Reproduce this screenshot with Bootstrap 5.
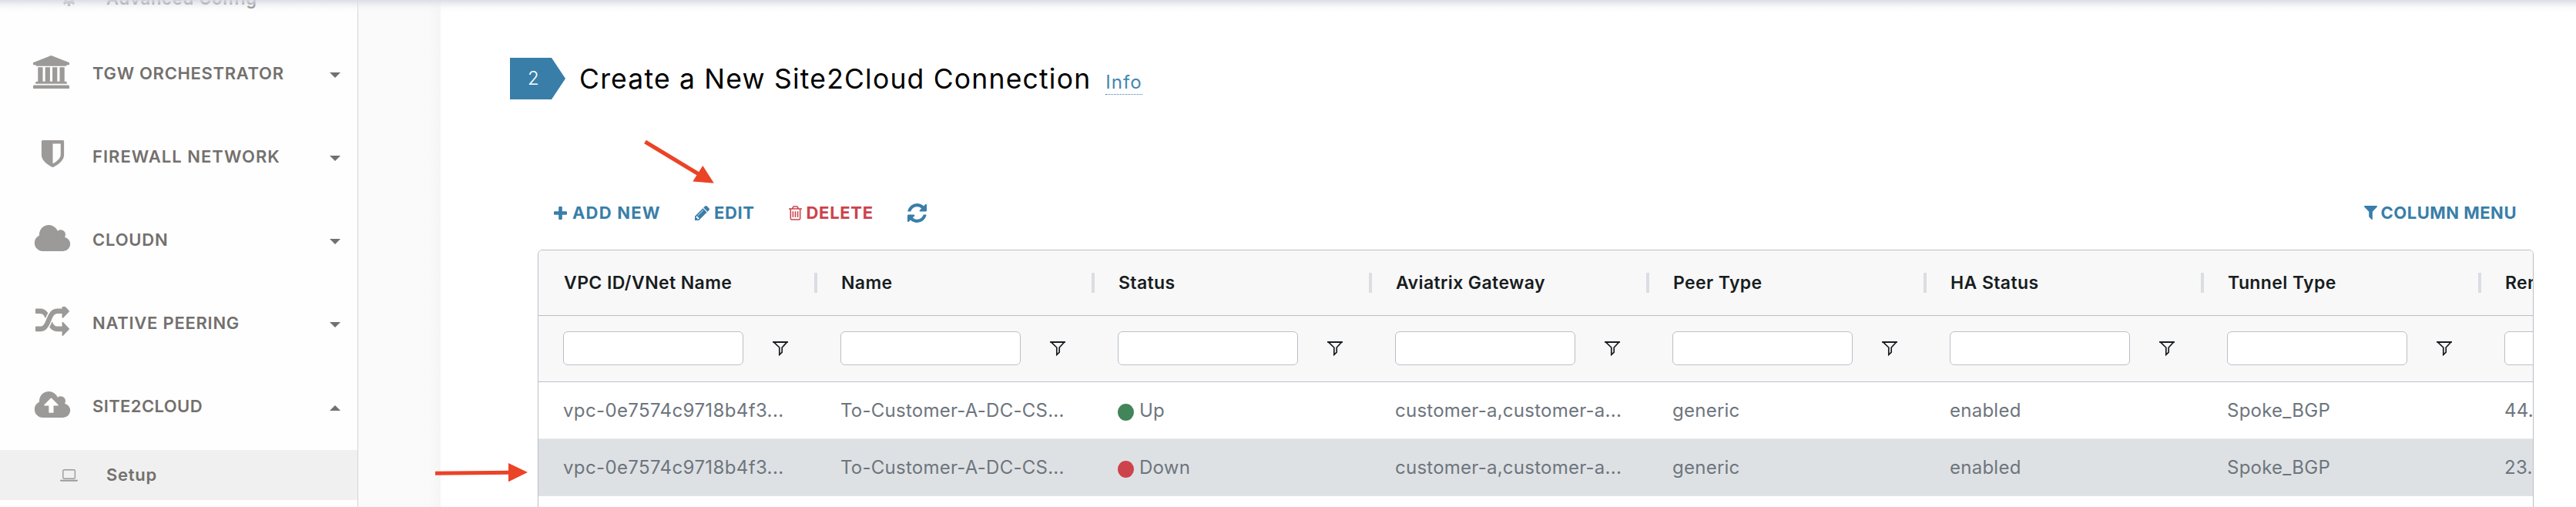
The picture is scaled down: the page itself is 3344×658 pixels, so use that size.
<!DOCTYPE html>
<html lang="en">
<head>
<meta charset="utf-8">
<title>Site2Cloud Setup</title>
<link href="https://cdn.jsdelivr.net/npm/bootstrap@5.3.0/dist/css/bootstrap.min.css" rel="stylesheet">
<style>
  body { font-family: Inter, "Liberation Sans", sans-serif; background: #fff; height: 658px; overflow: hidden; }
  svg { display: block; flex: none; }
  .top-shade { height: 16px; z-index: 5; background: linear-gradient(rgba(217,219,228,.9), rgba(225,227,234,.62) 30%, rgba(240,241,245,.3) 65%, rgba(255,255,255,0)); }

  /* sidebar */
  .side-panel { width: 465px; height: 658px; border-right: 1px solid #d4d4d4; background: #fefefe; color: #73706d; font-size: 22px; font-weight: 600; }
  .side-list { margin-top: -34px; }
  .side-item { height: 108px; padding: 0 22px 0 36px; }
  .side-icon { width: 84px; color: #9c9a98; padding-bottom: 4px; }
  .side-icon svg { margin: 0 auto 0 7px; }
  .side-sub { height: 65px; padding-left: 78px; letter-spacing: .74px; }
  .side-sub .sub-icon { width: 60px; color: #9c9a98; }
  .side-sub.is-active { background: #f0f0f0; margin-top: 3px; }
  .caret { width: 0; height: 0; margin-top: 4px; border: 7px solid transparent; }
  .caret-dn { border-top-color: #73706d; border-bottom: 0; }
  .caret-up { border-bottom-color: #73706d; border-top: 0; }
  .gutter { width: 107px; background: linear-gradient(to right, #fafafa 85%, #f5f5f5); }

  /* page content */
  .main-pane { height: 658px; }
  .step-head { height: 54px; margin-top: 75px; margin-left: 90px; }
  .step-tag { width: 72px; height: 54px; padding-left: 23px; background: #397ea9; color: #fff; font-size: 24px; font-weight: 300; line-height: 54px; clip-path: polygon(0 0, 75% 0, 100% 50%, 75% 100%, 0 100%); }
  .step-title { font-size: 35.5px; line-height: 56px; letter-spacing: 1.2px; color: #000; font-weight: 400; margin-left: 18px; }
  .step-info { font-size: 24px; line-height: 30px; letter-spacing: 1px; color: #4386b1; font-weight: 400; margin-left: 19px; border-bottom: 1px dotted #397ea9; height: 31px; }
  .tools { height: 30px; margin: 132px 77px 0 147px; color: #397ea9; font-size: 22px; font-weight: 700; line-height: 30px; }
  .tool-add { width: 183px; } .tool-edit { width: 121.5px; } .tool-del { width: 154.5px; color: #cc434c; }

  /* connections grid */
  .grid-box { margin: 33px 55px 0 126px; height: 400px; border: 1px solid #babfc7; border-radius: 6px 6px 0 0; }
  .grid-line { display: grid; grid-template-columns: repeat(8, 360px); width: 2880px; }
  .grid-line > div { padding-left: 33px; display: flex; align-items: center; white-space: nowrap; position: relative; }
  .g-head { height: 85px; background: #f8f8f8; border-bottom: 1px solid #babfc7; font-size: 23px; font-weight: 600; letter-spacing: .4px; color: #181d1f; }
  .g-head > div { padding-top: 1px; }
  .g-head > div:not(:last-child)::after { content: ""; position: absolute; right: -2px; top: 29px; width: 4px; height: 26px; background: #dadde1; }
  .g-filter { height: 86px; background: #f8f8f8; border-bottom: 1px solid #babfc7; }
  .g-filter > div { padding-bottom: 1px; }
  .g-filter .form-control { width: 234px; height: 44px; margin-left: -1px; padding: 0; border: 1px solid #babfc7; border-radius: 6px; background: #fff; }
  .g-filter svg { margin-left: 38px; }
  .g-row { height: 74px; font-size: 24px; letter-spacing: .25px; color: #6d757d; border-bottom: 1px solid #e9ecef; }
  .g-row > div { padding-left: 32px; padding-top: 1px; }
  .g-row > div:first-child { letter-spacing: .38px; }
  .g-row.is-picked { background: #dee1e4; border-color: #e4e6e9; }
  .state-dot { width: 21px; height: 22px; border-radius: 50%; margin: 3px 7px 0 0; }
  .dot-up { background: #418558; } .dot-down { background: #cc434c; }

  .note-arrow { z-index: 6; }
</style>
</head>
<body>
<svg width="0" height="0" class="position-absolute">
  <symbol id="i-bank" viewBox="0 0 1920 1792" preserveAspectRatio="none"><path d="M960 0l960 384v128h-128q0 26-20.5 45t-48.5 19h-1526q-28 0-48.5-19t-20.5-45h-128v-128zm-704 640h256v768h128v-768h256v768h128v-768h256v768h128v-768h256v768h59q28 0 48.5 19t20.5 45v64h-1664v-64q0-26 20.5-45t48.5-19h59v-768zm1595 960q28 0 48.5 19t20.5 45v128h-1920v-128q0-26 20.5-45t48.5-19h1782z"/></symbol>
  <symbol id="i-shield" viewBox="256 128 1280 1664"><path d="M1344 960v-640h-448v1137q119-63 213-137 235-184 235-360zm192-768v768q0 86-33.5 170.5t-83 150-118 127.5-126.5 103-121 77.5-89.5 49.5-42.5 20q-12 6-26 6t-26-6q-16-7-42.5-20t-89.5-49.5-121-77.5-126.5-103-118-127.5-83-150-33.5-170.5v-768q0-26 19-45t45-19h1152q26 0 45 19t19 45z"/></symbol>
  <symbol id="i-cloud" viewBox="64 128 1920 1408"><path d="M1984 1152q0 159-112.5 271.5t-271.5 112.5h-1088q-185 0-316.5-131.5t-131.5-316.5q0-132 71-241.5t187-163.5q-2-28-2-43 0-212 150-362t362-150q158 0 286.5 88t187.5 230q70-62 166-62 106 0 181 75t75 181q0 75-41 138 129 30 213 134.5t84 239.5z"/></symbol>
  <symbol id="i-cloud-up" viewBox="64 128 1920 1408"><path d="M1344 864q0-14-9-23l-352-352q-9-9-23-9t-23 9l-351 351q-10 12-10 24 0 14 9 23t23 9h224v352q0 13 9.5 22.5t22.5 9.5h192q13 0 22.5-9.5t9.5-22.5v-352h224q13 0 22.5-9.5t9.5-22.5zm640 288q0 159-112.5 271.5t-271.5 112.5h-1088q-185 0-316.5-131.5t-131.5-316.5q0-132 71-241.5t187-163.5q-2-28-2-43 0-212 150-362t362-150q158 0 286.5 88t187.5 230q70-62 166-62 106 0 181 75t75 181q0 75-41 138 129 30 213 134.5t84 239.5z"/></symbol>
  <symbol id="i-random" viewBox="0 160 1792 1472" preserveAspectRatio="none"><path d="M666 481q-60 92-137 273-22-45-37-72.5t-40.5-63.5-51-56.5-63-35-81.5-14.5h-224q-14 0-23-9t-9-23v-192q0-14 9-23t23-9h224q250 0 410 225zm1126 799q0 14-9 23l-320 320q-9 9-23 9-13 0-22.5-9.5t-9.5-22.5v-192q-32 0-85 .5t-81 1-73-1-71-5-64-10.5-63-18.5-58-28.5-59-40-55-53.5-56-69.5q59-93 136-273 22 45 37 72.5t40.5 63.5 51 56.5 63 35 81.5 14.5h256v-192q0-14 9-23t23-9q12 0 24 10l319 319q9 9 9 23zm0-896q0 14-9 23l-320 320q-9 9-23 9-13 0-22.5-9.5t-9.5-22.5v-192h-256q-48 0-87 15t-69 45-51 61.5-45 77.5q-32 62-78 171-29 66-49.5 111t-54 105-64 100-74 83-90 68.5-106.5 42-128 16.5h-224q-14 0-23-9t-9-23v-192q0-14 9-23t23-9h224q48 0 87-15t69-45 51-61.5 45-77.5q32-62 78-171 29-66 49.5-111t54-105 64-100 74-83 90-68.5 106.5-42 128-16.5h256v-192q0-14 9-23t23-9q12 0 24 10l319 319q9 9 9 23z"/></symbol>
  <symbol id="i-funnel" viewBox="0 0 20 19"><path d="M1.6 1.2h16.8L12.2 8v6.2L8.8 17.4V8z" fill="none" stroke="#181d1f" stroke-width="1.7"/><path d="M0 0h20v1.8H0z" fill="#181d1f"/></symbol>
</svg>

<div class="top-shade position-fixed top-0 start-0 w-100"></div>

<div class="d-flex">
  <aside class="side-panel flex-shrink-0 overflow-hidden">
    <nav class="side-list d-flex flex-column">
      <div class="side-sub d-flex align-items-center flex-shrink-0"><span class="sub-icon"><svg width="19" height="19" viewBox="0 0 20 20" style="margin-left:2px"><circle cx="10" cy="10" r="5" fill="none" stroke="currentColor" stroke-width="4"/><path d="M10 0v20M0 10h20M3 3l14 14M17 3L3 17" stroke="currentColor" stroke-width="3.4" stroke-dasharray="4 12 4 12"/></svg></span><span>Advanced Config</span></div>
      <div class="side-item d-flex align-items-center" style="margin-top:10px"><span class="side-icon"><svg width="47" height="43" fill="currentColor"><use href="#i-bank"/></svg></span><span class="flex-grow-1" style="letter-spacing:.68px">TGW ORCHESTRATOR</span><i class="caret caret-dn"></i></div>
      <div class="side-item d-flex align-items-center"><span class="side-icon"><svg width="47" height="38" fill="currentColor"><use href="#i-shield" x="2"/></svg></span><span class="flex-grow-1" style="letter-spacing:1.02px">FIREWALL NETWORK</span><i class="caret caret-dn"></i></div>
      <div class="side-item d-flex align-items-center"><span class="side-icon"><svg width="50" height="34" fill="currentColor"><use href="#i-cloud"/></svg></span><span class="flex-grow-1" style="letter-spacing:.8px">CLOUDN</span><i class="caret caret-dn"></i></div>
      <div class="side-item d-flex align-items-center"><span class="side-icon"><svg width="47" height="38" fill="currentColor"><use href="#i-random" x="3" width="44" height="38"/></svg></span><span class="flex-grow-1" style="letter-spacing:.74px">NATIVE PEERING</span><i class="caret caret-dn"></i></div>
      <div class="side-item d-flex align-items-center"><span class="side-icon"><svg width="50" height="34" fill="currentColor"><use href="#i-cloud-up"/></svg></span><span class="flex-grow-1" style="letter-spacing:.4px">SITE2CLOUD</span><i class="caret caret-up"></i></div>
      <div class="side-sub is-active d-flex align-items-center"><span class="sub-icon"><svg width="23" height="16" viewBox="0 0 23 16"><rect x="3.8" y=".7" width="15.6" height="11.6" rx="1.6" fill="none" stroke="currentColor" stroke-width="1.4"/><path d="M0 13.8h23v.7q0 1.3-2 1.3H2q-2 0-2-1.3z" fill="currentColor"/></svg></span><span>Setup</span></div>
    </nav>
  </aside>
  <div class="gutter flex-shrink-0"></div>

  <main class="main-pane flex-grow-1 overflow-hidden">
    <div class="step-head d-flex">
      <div class="step-tag flex-shrink-0">2</div>
      <div class="d-flex align-items-baseline"><h1 class="step-title mb-0">Create a New Site2Cloud Connection</h1><a class="step-info text-decoration-none">Info</a></div>
    </div>

    <div class="tools d-flex align-items-center">
      <span class="tool-add d-flex align-items-center"><svg width="17" height="17" viewBox="192 128 1408 1408" fill="currentColor"><path d="M1600 736v192q0 40-28 68t-68 28h-416v416q0 40-28 68t-68 28h-192q-40 0-68-28t-28-68v-416h-416q-40 0-68-28t-28-68v-192q0-40 28-68t68-28h416v-416q0-40 28-68t68-28h192q40 0 68 28t28 68v416h416q40 0 68 28t28 68z"/></svg><span style="margin-left:7px;letter-spacing:1.2px">ADD NEW</span></span>
      <span class="tool-edit d-flex align-items-center"><svg width="19" height="19" viewBox="128 149 1515 1515" fill="currentColor"><path d="M491 1536l91-91-235-235-91 91v107h128v128h107zm523-928q0-22-22-22-10 0-17 7l-542 542q-7 7-7 17 0 22 22 22 10 0 17-7l542-542q7-7 7-17zm-54-192l416 416-832 832h-416v-416zm683 96q0 53-37 90l-166 166-416-416 166-165q36-38 90-38 53 0 91 38l235 234q37 39 37 91z"/></svg><span style="margin-left:6px;letter-spacing:.6px">EDIT</span></span>
      <span class="tool-del d-flex align-items-center"><svg width="17" height="19" viewBox="192 128 1408 1536" fill="currentColor"><path d="M704 736v576q0 14-9 23t-23 9h-64q-14 0-23-9t-9-23v-576q0-14 9-23t23-9h64q14 0 23 9t9 23zm256 0v576q0 14-9 23t-23 9h-64q-14 0-23-9t-9-23v-576q0-14 9-23t23-9h64q14 0 23 9t9 23zm256 0v576q0 14-9 23t-23 9h-64q-14 0-23-9t-9-23v-576q0-14 9-23t23-9h64q14 0 23 9t9 23zm128 724v-948h-896v948q0 22 7 40.5t14.5 27 10.5 8.5h832q3 0 10.5-8.5t14.5-27 7-40.5zm-672-1076h448l-48-117q-7-9-17-11h-317q-10 2-17 11zm928 32v64q0 14-9 23t-23 9h-96v948q0 83-47 143.5t-113 60.5h-832q-66 0-113-58.5t-47-141.5v-952h-96q-14 0-23-9t-9-23v-64q0-14 9-23t23-9h309l70-167q15-37 54-63t79-26h320q40 0 79 26t54 63l70 167h309q14 0 23 9t9 23z"/></svg><span style="margin-left:6px;letter-spacing:.7px">DELETE</span></span>
      <svg width="25" height="25" viewBox="128 128 1536 1536" fill="currentColor"><path d="M1639 1056q0 5-1 7-64 268-268 434.5t-478 166.5q-146 0-282.5-55t-243.5-157l-129 129q-19 19-45 19t-45-19-19-45v-448q0-26 19-45t45-19h448q26 0 45 19t19 45-19 45l-137 137q71 66 161 102t187 36q134 0 250-65t186-179q11-17 53-117 8-23 30-23h192q13 0 22.5 9.5t9.5 22.5zm25-800v448q0 26-19 45t-45 19h-448q-26 0-45-19t-19-45 19-45l138-138q-148-137-349-137-134 0-250 65t-186 179q-11 17-53 117-8 23-30 23h-199q-13 0-22.5-9.5t-9.5-22.5v-7q65-268 270-434.5t480-166.5q146 0 284 55.5t245 156.5l130-129q19-19 45-19t45 19 19 45z"/></svg>
      <span class="ms-auto d-flex align-items-center"><svg width="17" height="18" viewBox="192 256 1408 1408" preserveAspectRatio="none" fill="currentColor"><path d="M1595 295q17 41-14 70l-493 493v742q0 42-39 59-13 5-25 5-27 0-45-19l-256-256q-19-19-19-45v-486l-493-493q-31-29-14-70 17-39 59-39h1280q42 0 59 39z"/></svg><span style="margin-left:5px;letter-spacing:.5px">COLUMN MENU</span></span>
    </div>

    <div class="grid-box overflow-hidden">
      <div class="grid-line g-head"><div>VPC ID/VNet Name</div><div>Name</div><div>Status</div><div>Aviatrix Gateway</div><div>Peer Type</div><div>HA Status</div><div>Tunnel Type</div><div>Rem</div></div>
      <div class="grid-line g-filter">
        <div><input class="form-control"><svg width="20" height="19"><use href="#i-funnel"/></svg></div>
        <div><input class="form-control"><svg width="20" height="19"><use href="#i-funnel"/></svg></div>
        <div><input class="form-control"><svg width="20" height="19"><use href="#i-funnel"/></svg></div>
        <div><input class="form-control"><svg width="20" height="19"><use href="#i-funnel"/></svg></div>
        <div><input class="form-control"><svg width="20" height="19"><use href="#i-funnel"/></svg></div>
        <div><input class="form-control"><svg width="20" height="19"><use href="#i-funnel"/></svg></div>
        <div><input class="form-control"><svg width="20" height="19"><use href="#i-funnel"/></svg></div>
        <div><input class="form-control"></div>
      </div>
      <div class="grid-line g-row"><div>vpc-0e7574c9718b4f3...</div><div>To-Customer-A-DC-CS...</div><div><i class="state-dot dot-up"></i>Up</div><div>customer-a,customer-a...</div><div>generic</div><div>enabled</div><div>Spoke_BGP</div><div>44.</div></div>
      <div class="grid-line g-row is-picked"><div>vpc-0e7574c9718b4f3...</div><div>To-Customer-A-DC-CS...</div><div><i class="state-dot dot-down"></i>Down</div><div>customer-a,customer-a...</div><div>generic</div><div>enabled</div><div>Spoke_BGP</div><div>23.</div></div>
    </div>
  </main>
</div>

<!-- callout arrows laid over the page -->
<svg class="note-arrow position-absolute top-0 start-0 pe-none" width="1000" height="658" fill="#eb4326" stroke="#eb4326">
  <path d="M837.5 184L907 226" stroke-width="5"/><path d="M926.8 237.8L899.3 235.6L912.3 215z" stroke="none"/>
  <path d="M565 614.2L662 613.3" stroke-width="5"/><path d="M685 613L660 625.3V601z" stroke="none"/>
</svg>
<script src="https://cdn.jsdelivr.net/npm/bootstrap@5.3.0/dist/js/bootstrap.bundle.min.js"></script>
</body>
</html>
